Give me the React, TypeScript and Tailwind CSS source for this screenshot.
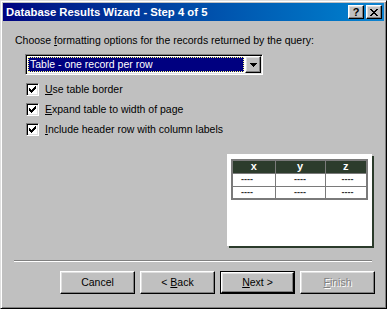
import React from "react";

const FONT = "font-['Liberation_Sans',Arial,sans-serif]";

const raised =
  "border border-t-white border-l-white border-r-black border-b-black shadow-[inset_-1px_-1px_#808080,inset_1px_1px_#dfdfdf]";

function Acc({ children }: { children: React.ReactNode }) {
  return <span className="underline underline-offset-[1px]">{children}</span>;
}

function Check() {
  // classic 7x7 pixel tick
  const rows = ["......X", ".....XX", "X...XXX", "XX.XXX.", "XXXXX..", ".XXX...", "..X...."];
  return (
    <span className="inline-flex h-[13px] w-[13px] shrink-0 items-center justify-center border border-t-[#808080] border-l-[#808080] border-r-white border-b-white bg-white shadow-[inset_1px_1px_#000,inset_-1px_-1px_#dfdfdf]">
      <svg width="7" height="7" viewBox="0 0 7 7" shapeRendering="crispEdges">
        {rows.map((r, y) =>
          r.split("").map((c, x) => (c === "X" ? <rect key={`${x}-${y}`} x={x} y={y} width="1" height="1" fill="#000" /> : null))
        )}
      </svg>
    </span>
  );
}

const OPTIONS: [string, string][] = [
  ["U", "se table border"],
  ["E", "xpand table to width of page"],
  ["I", "nclude header row with column labels"],
];

function Btn({ children, primary, disabled }: { children: React.ReactNode; primary?: boolean; disabled?: boolean }) {
  return (
    <div className={`w-[75px] h-[23px] ${primary ? "border border-black" : ""}`}>
      <div
        className={`flex h-full w-full items-center justify-center bg-[#c0c0c0] ${raised} ${
          disabled ? "text-[#808080] [text-shadow:1px_1px_#fff]" : "text-black"
        }`}
      >
        {children}
      </div>
    </div>
  );
}

export default function App() {
  return (
    <div className={`w-[387px] h-[309px] bg-[#c0c0c0] text-[10.5px] leading-[13px] text-black ${FONT} border border-t-[#dfdfdf] border-l-[#dfdfdf] border-r-black border-b-black shadow-[inset_1px_1px_#fff,inset_-1px_-1px_#808080] p-[2px] flex flex-col`}>
      {/* title bar */}
      <div className="flex h-[18px] items-center bg-gradient-to-r from-[#000080] to-[#1084d0] pl-[3px] pr-[2px]">
        <span className="flex-1 text-[11.3px] font-bold text-white">Database Results Wizard - Step 4 of 5</span>
        <div className={`flex h-[14px] w-[16px] items-center justify-center bg-[#c0c0c0] ${raised} text-[11px] font-bold leading-none`}>?</div>
        <div className={`ml-[2px] flex h-[14px] w-[16px] items-center justify-center bg-[#c0c0c0] ${raised}`}>
          <svg width="8" height="7" viewBox="0 0 8 7" shapeRendering="crispEdges">
            <path d="M0 0h2v1h-2zM6 0h2v1h-2zM1 1h2v1h-2zM5 1h2v1h-2zM2 2h4v1h-4zM3 3h2v1h-2zM2 4h4v1h-4zM1 5h2v1h-2zM5 5h2v1h-2zM0 6h2v1h-2zM6 6h2v1h-2z" fill="#000" />
          </svg>
        </div>
      </div>

      {/* body */}
      <div className="flex flex-1 flex-col px-[12px] pt-[13px]">
        <div>
          Choose <Acc>f</Acc>ormatting options for the records returned by the query:
        </div>

        <div className="ml-[10px] mt-[7px] flex h-[21px] w-[238px] border border-t-[#808080] border-l-[#808080] border-r-white border-b-white bg-white p-px shadow-[inset_1px_1px_#000,inset_-1px_-1px_#dfdfdf]">
          <div className="flex flex-1 items-center p-[1px] bg-white">
            <div className="flex h-full flex-1 items-center bg-[#000080] pl-[2px] text-white outline-1 outline-dotted outline-[#ffff80] -outline-offset-1">
              Table - one record per row
            </div>
          </div>
          <div className={`flex w-[16px] items-center justify-center bg-[#c0c0c0] ${raised}`}>
            <svg width="7" height="4" viewBox="0 0 7 4" shapeRendering="crispEdges">
              <path d="M0 0h7v1h-7zM1 1h5v1h-5zM2 2h3v1h-3zM3 3h1v1h-1z" fill="#000" />
            </svg>
          </div>
        </div>

        <div className="ml-[11px] mt-[8px] flex flex-col gap-[7px]">
          {OPTIONS.map(([a, rest]) => (
            <div key={rest} className="flex items-center gap-[6px]">
              <Check />
              <span>
                <Acc>{a}</Acc>
                {rest}
              </span>
            </div>
          ))}
        </div>

        {/* preview */}
        <div className="mt-[18px] flex justify-end">
          <div className="h-[92px] w-[145px] bg-white px-[4px] pt-[5px] shadow-[2px_2px_0_#2b3b2b]">
            <table className="w-full border-collapse border-2 border-[#7a7a7a] text-[11px] leading-[11px]">
              <thead>
                <tr className="bg-[#2c3c2c] text-white font-bold h-[13px]">
                  <th className="w-[43px] border border-[#7a7a7a]">x</th>
                  <th className="w-[50px] border border-[#7a7a7a]">y</th>
                  <th className="border border-[#7a7a7a]">z</th>
                </tr>
              </thead>
              <tbody>
                {[0, 1].map((r) => (
                  <tr key={r} className="h-[13px] font-bold text-[#333]">
                    <td className="border border-[#7a7a7a] pl-[8px] text-[9px]">----</td>
                    <td className="border border-[#7a7a7a] text-center text-[9px]">----</td>
                    <td className="border border-[#7a7a7a] pl-[16px] text-[9px]">----</td>
                  </tr>
                ))}
              </tbody>
            </table>
          </div>
        </div>

        <div className="-ml-[1px] mt-[14px] h-[2px] border-t border-t-[#808080] border-b border-b-white w-[358px]" />

        <div className="mt-[9px] -mr-[3px] flex justify-end gap-[5px]">
          <Btn>Cancel</Btn>
          <Btn>
            &lt;&nbsp;<Acc>B</Acc>ack
          </Btn>
          <Btn primary>
            <Acc>N</Acc>ext&nbsp;&gt;
          </Btn>
          <Btn disabled>
            <Acc>F</Acc>inish
          </Btn>
        </div>
      </div>
    </div>
  );
}
